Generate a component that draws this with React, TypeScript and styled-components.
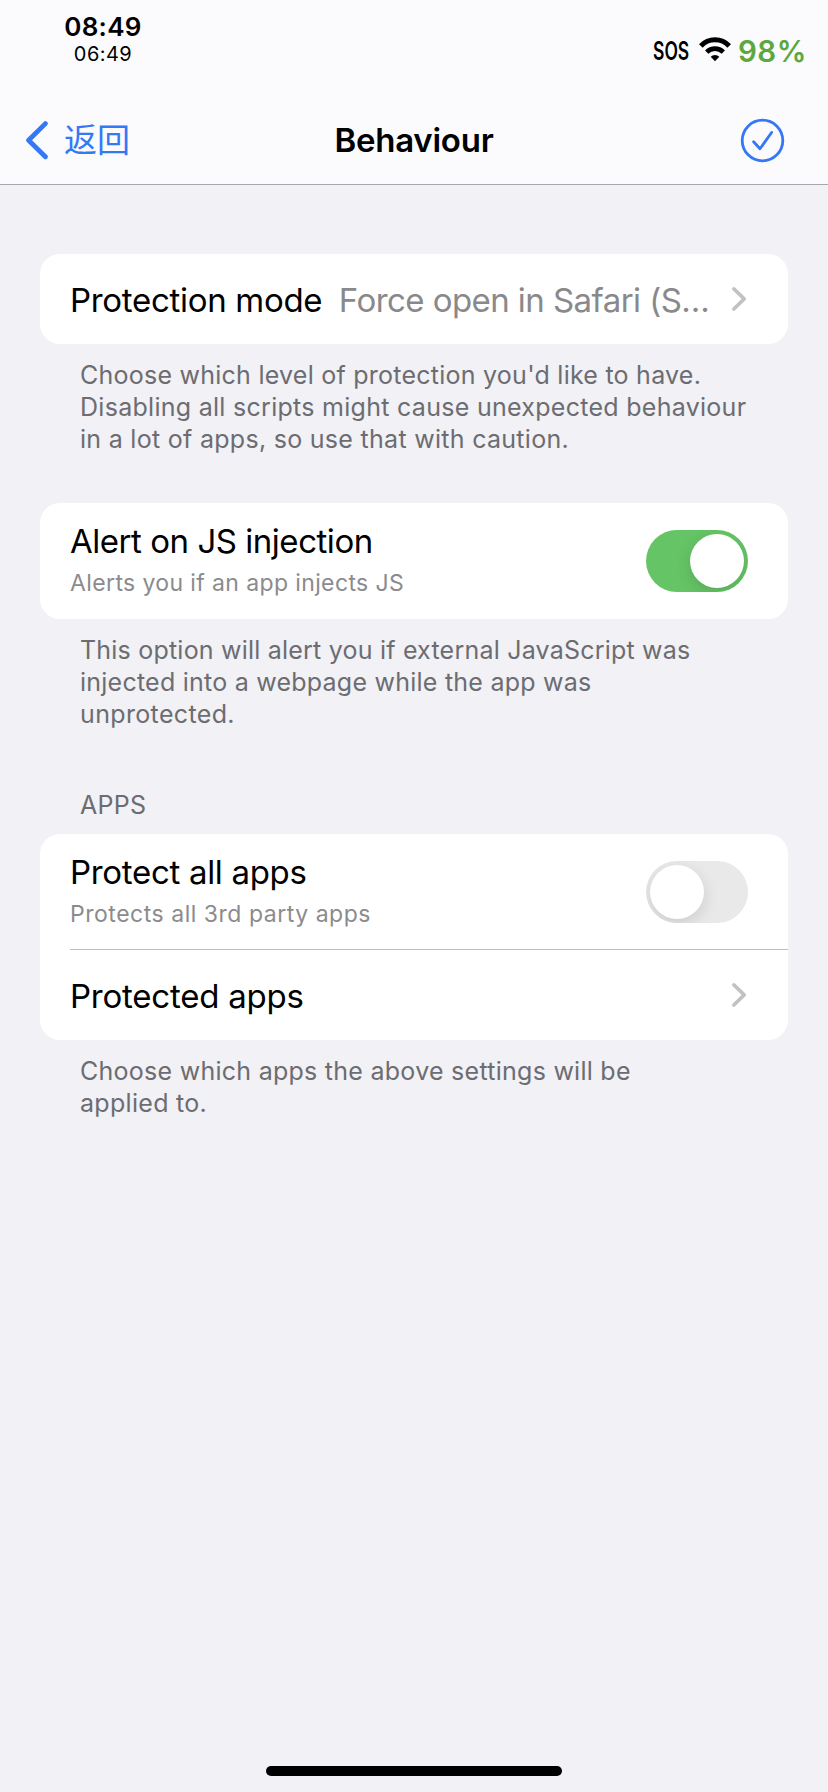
import React, { useState } from "react";
import styled, { createGlobalStyle } from "styled-components";

const GlobalStyle = createGlobalStyle`
  * { box-sizing: border-box; }
  html, body { margin: 0; padding: 0; background: #f1f1f6; }
  body { font-family: Inter, "Noto Sans CJK SC", sans-serif; color: #000; }
  button { border: 0; padding: 0; margin: 0; background: none; font: inherit; color: inherit; }
`;

const Screen = styled.div`
  display: flex;
  flex-direction: column;
  width: 828px;
  height: 1792px;
  background: #f1f1f6;
`;

const Header = styled.header`
  height: 185px;
  background: #fbfbfe;
  border-bottom: 1px solid #a7a7ab;
`;

const StatusBar = styled.div`
  display: flex;
  justify-content: space-between;
  height: 96px;
`;

const Clocks = styled.div`
  display: flex;
  flex-direction: column;
  align-items: center;
  width: 106px;
  margin-left: 50px;
  padding-top: 12px;
`;

const LocalTime = styled.div`
  font-size: 26px;
  font-weight: 600;
  line-height: 30px;
  letter-spacing: 0.3px;
`;

const SecondTime = styled.div`
  font-size: 20px;
  line-height: 24px;
  letter-spacing: 0.45px;
`;

const Indicators = styled.div`
  display: flex;
  padding: 33px 22px 0 0;
`;

const Carrier = styled.div`
  width: 46px;
  font-size: 25px;
  font-weight: 600;
  line-height: 36px;

  span {
    display: inline-block;
    transform: scaleX(0.7);
    transform-origin: left center;
  }
`;

const WifiIcon = styled.svg`
  width: 32px;
  height: 25px;
  margin: 4px 7px 0 0;
`;

const Battery = styled.div`
  width: 68px;
  font-size: 29.5px;
  font-weight: 600;
  line-height: 36px;
  letter-spacing: 0.5px;
  color: #5ca83f;
`;

const NavBar = styled.nav`
  display: grid;
  grid-template-columns: 1fr auto 1fr;
  align-items: center;
  height: 88px;
  padding: 0 43px 0 24px;
`;

const BackButton = styled.button`
  display: flex;
  align-items: center;
  gap: 14px;
  font-size: 33px;
  line-height: 40px;
  color: #3478f6;
  font-family: "Noto Sans CJK SC", sans-serif;
  font-weight: 400;

  span {
    padding-bottom: 4px;
  }
`;

const Title = styled.h1`
  margin: 0 0 0 19px;
  font-size: 33px;
  font-weight: 600;
  line-height: 40px;
  letter-spacing: -0.235px;
`;

const DoneButton = styled.button`
  display: flex;
  justify-self: end;
`;

const Content = styled.main`
  flex: 1;
  padding: 69px 40px 0;
`;

const Section = styled.section<{ $gap?: number }>`
  margin-top: ${(p) => p.$gap ?? 0}px;
`;

const SectionTitle = styled.h2<{ $tracking: number }>`
  margin: 0 0 13px;
  padding-left: 40px;
  font-size: 25px;
  font-weight: 400;
  line-height: 32px;
  letter-spacing: ${(p) => p.$tracking}px;
  color: #6c6c71;
`;

const Card = styled.div`
  border-radius: 20px;
  background: #fff;
`;

const LinkRow = styled.div`
  display: flex;
  align-items: center;
  height: 90px;
  padding: 2px 41px 0 30px;
`;

const SwitchRow = styled.div`
  display: flex;
  align-items: center;
  justify-content: space-between;
  height: 116px;
  padding: 0 40px 0 30px;
`;

const Divider = styled.hr`
  height: 1px;
  margin: -1px 0 0 30px;
  border: 0;
  background: #bcbcbe;
`;

const Labels = styled.div`
  display: flex;
  flex-direction: column;
  gap: 6px;
  padding-bottom: 4px;
`;

const Label = styled.div<{ $tracking: number }>`
  font-size: 33px;
  line-height: 42px;
  letter-spacing: ${(p) => p.$tracking}px;
  white-space: nowrap;
`;

const Subtitle = styled.div<{ $tracking: number }>`
  font-size: 23px;
  line-height: 30px;
  letter-spacing: ${(p) => p.$tracking}px;
  white-space: nowrap;
  color: #8b8b8d;
`;

const Value = styled(Label)`
  margin-left: 16.5px;
  color: #89898b;
`;

const ChevronIcon = styled.svg`
  width: 16px;
  height: 26px;
  margin: 0 0 2px auto;
  flex: none;
`;

const Footer = styled.p`
  margin: 15px 0 0;
  padding-left: 40px;
  font-size: 25px;
  line-height: 32px;
  color: #6c6c71;
`;

const FooterLine = styled.span<{ $tracking: number }>`
  display: block;
  letter-spacing: ${(p) => p.$tracking}px;
  white-space: nowrap;
`;

const Track = styled.button<{ $on: boolean }>`
  display: flex;
  justify-content: ${(p) => (p.$on ? "flex-end" : "flex-start")};
  width: 102px;
  height: 62px;
  padding: 4px;
  border-radius: 31px;
  overflow: hidden;
  background: ${(p) => (p.$on ? "#65c466" : "#e9e9ea")};
`;

const Knob = styled.span`
  width: 54px;
  height: 54px;
  border-radius: 50%;
  background: #fff;
  box-shadow: 0 5px 16px rgba(0, 0, 0, 0.13);
`;

const HomeIndicator = styled.div`
  width: 296px;
  height: 10px;
  margin: 0 auto 16px;
  border-radius: 5px;
  background: #000;
`;

function Chevron() {
  return (
    <ChevronIcon viewBox="0 0 16 26" fill="none">
      <path d="M2.8 2.8 L13.2 12.9 L2.8 23" stroke="#c2c2c4" strokeWidth="3.6" strokeLinecap="round" strokeLinejoin="round" />
    </ChevronIcon>
  );
}

function Switch({ initial, label }: { initial: boolean; label: string }) {
  const [on, setOn] = useState(initial);
  return (
    <Track type="button" role="switch" aria-checked={on} aria-label={label} $on={on} onClick={() => setOn(!on)}>
      <Knob />
    </Track>
  );
}

export default function App() {
  return (
    <Screen>
      <GlobalStyle />
      <Header>
        <StatusBar>
          <Clocks>
            <LocalTime>08:49</LocalTime>
            <SecondTime>06:49</SecondTime>
          </Clocks>
          <Indicators>
            <Carrier><span>SOS</span></Carrier>
            <WifiIcon viewBox="0 0 32 25" fill="none">
              <path d="M1.8 9 A19.2 19.2 0 0 1 30.2 9" stroke="#000" strokeWidth="5" />
              <path d="M7.7 15.1 A11.6 11.6 0 0 1 24.3 15.1" stroke="#000" strokeWidth="4.6" />
              <path d="M11.7 19.8 A5.9 5.9 0 0 1 20.3 19.8 L16 24.2 Z" fill="#000" />
            </WifiIcon>
            <Battery>98%</Battery>
          </Indicators>
        </StatusBar>
        <NavBar>
          <BackButton type="button">
            <svg width="26" height="40" viewBox="0 0 26 40" fill="none">
              <path d="M21.4 3.6 L4.6 20.2 L21.4 36.8" stroke="#3478f6" strokeWidth="4.8" strokeLinecap="round" strokeLinejoin="round" />
            </svg>
            <span>返回</span>
          </BackButton>
          <Title>Behaviour</Title>
          <DoneButton type="button" aria-label="Done">
            <svg width="45" height="45" viewBox="0 0 45 45" fill="none" stroke="#3478f6">
              <circle cx="22.5" cy="22.5" r="20.3" strokeWidth="2.8" />
              <path d="M13.6 23.7 L20 30.8 L31.6 14.5" strokeWidth="2.8" strokeLinecap="round" strokeLinejoin="round" />
            </svg>
          </DoneButton>
        </NavBar>
      </Header>

      <Content>
        <Section>
          <Card>
            <LinkRow>
              <Label $tracking={-0.3}>Protection mode</Label>
              <Value $tracking={-0.56}>Force open in Safari (S…</Value>
              <Chevron />
            </LinkRow>
          </Card>
          <Footer>
            <FooterLine $tracking={0.245}>Choose which level of protection you'd like to have.</FooterLine>
            <FooterLine $tracking={0.282}>Disabling all scripts might cause unexpected behaviour</FooterLine>
            <FooterLine $tracking={0.288}>in a lot of apps, so use that with caution.</FooterLine>
          </Footer>
        </Section>

        <Section $gap={48}>
          <Card>
            <SwitchRow>
              <Labels>
                <Label $tracking={-0.466}>Alert on JS injection</Label>
                <Subtitle $tracking={0.383}>Alerts you if an app injects JS</Subtitle>
              </Labels>
              <Switch initial={true} label="Alert on JS injection" />
            </SwitchRow>
          </Card>
          <Footer>
            <FooterLine $tracking={0.211}>This option will alert you if external JavaScript was</FooterLine>
            <FooterLine $tracking={0.236}>injected into a webpage while the app was</FooterLine>
            <FooterLine $tracking={0.35}>unprotected.</FooterLine>
          </Footer>
        </Section>

        <Section $gap={59}>
          <SectionTitle $tracking={0.3}>APPS</SectionTitle>
          <Card>
            <SwitchRow>
              <Labels>
                <Label $tracking={-0.308}>Protect all apps</Label>
                <Subtitle $tracking={0.52}>Protects all 3rd party apps</Subtitle>
              </Labels>
              <Switch initial={false} label="Protect all apps" />
            </SwitchRow>
            <Divider />
            <LinkRow>
              <Label $tracking={-0.227}>Protected apps</Label>
              <Chevron />
            </LinkRow>
          </Card>
          <Footer>
            <FooterLine $tracking={0.265}>Choose which apps the above settings will be</FooterLine>
            <FooterLine $tracking={0.3}>applied to.</FooterLine>
          </Footer>
        </Section>
      </Content>
      <HomeIndicator />
    </Screen>
  );
}
